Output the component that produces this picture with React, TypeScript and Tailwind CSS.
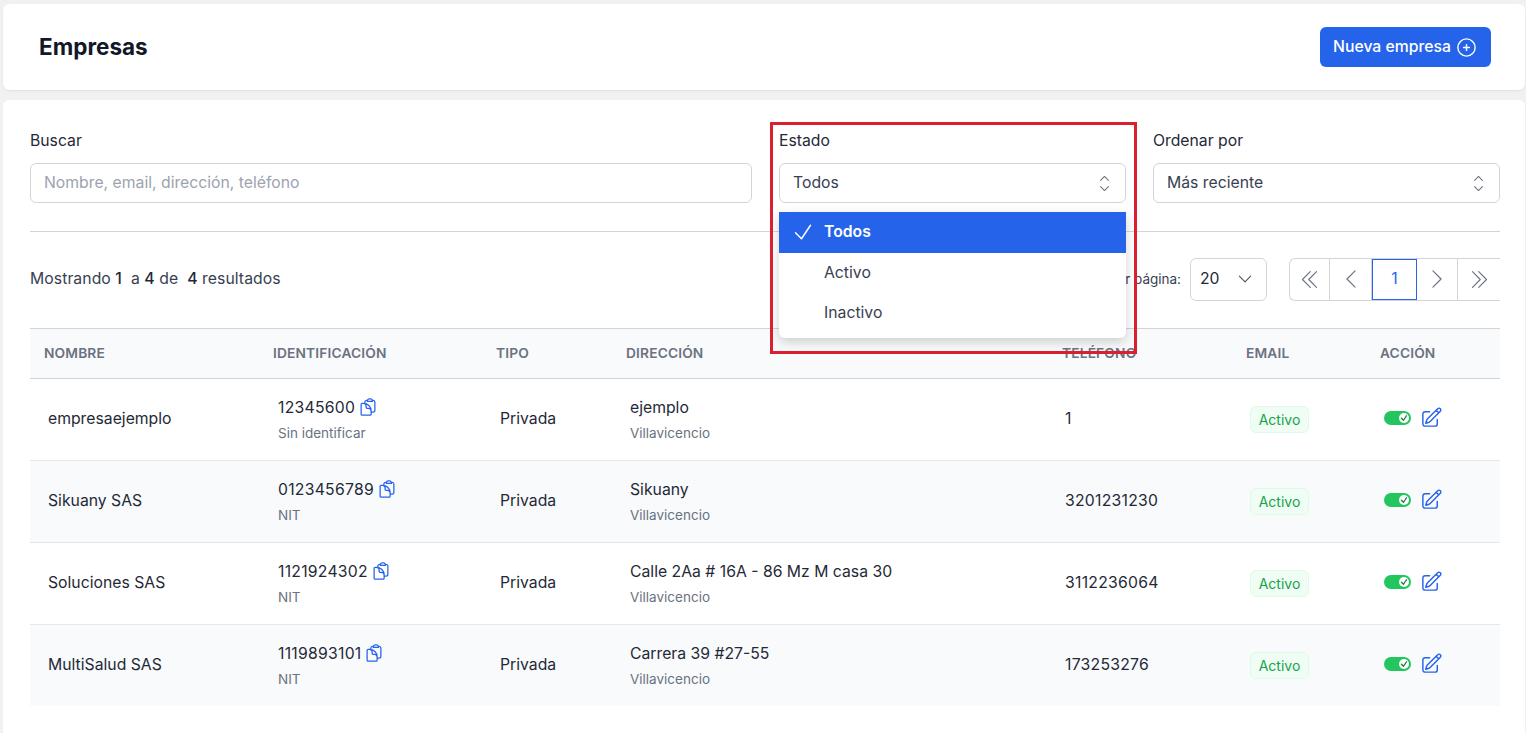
import {
	HiOutlineCheck,
	HiOutlineChevronDoubleLeft,
	HiOutlineChevronDoubleRight,
	HiOutlineChevronDown,
	HiOutlineChevronLeft,
	HiOutlineChevronRight,
	HiOutlineChevronUpDown,
	HiOutlineClipboardDocument,
	HiOutlinePencilSquare,
	HiOutlinePlusCircle,
} from "react-icons/hi2";

const empresas = [
	{ nombre: "empresaejemplo", id: "12345600", tipoId: "Sin identificar", dir: "ejemplo", tel: "1" },
	{ nombre: "Sikuany SAS", id: "0123456789", tipoId: "NIT", dir: "Sikuany", tel: "3201231230" },
	{ nombre: "Soluciones SAS", id: "1121924302", tipoId: "NIT", dir: "Calle 2Aa # 16A - 86 Mz M casa 30", tel: "3112236064" },
	{ nombre: "MultiSalud SAS", id: "1119893101", tipoId: "NIT", dir: "Carrera 39 #27-55", tel: "173253276" },
];

const columns = "grid grid-cols-[229px_223px_130px_436px_184px_134px_134px]";
const headers = ["NOMBRE", "IDENTIFICACIÓN", "TIPO", "DIRECCIÓN", "TELÉFONO", "EMAIL", "ACCIÓN"];

function Field({ label, value, placeholder }: { label: string; value?: string; placeholder?: string }) {
	return (
		<div className="flex flex-col">
			<span className="h-[24px] mt-[4px] text-[15.75px] leading-[24px] text-[#1f2937]">{label}</span>
			<div className="mt-[10px] flex h-[40px] items-center justify-between rounded-[6px] border border-[#d1d5db] bg-white pl-[13px] pr-[8px] text-[15.75px]">
				{placeholder ? <span className="text-[#9ca3af]">{placeholder}</span> : <span className="text-[#374151]">{value}</span>}
				{value && <HiOutlineChevronUpDown size={25} strokeWidth={1} className="text-[#6b7280]" />}
			</div>
		</div>
	);
}

function PageButton({ children, className }: { children: React.ReactNode; className: string }) {
	return <div className={`flex h-full items-center justify-center text-[#6b7280] ${className}`}>{children}</div>;
}

export default function App() {
	return (
		<div className="relative h-[733px] overflow-hidden bg-[#f1f1f1] pl-[3px] pr-[1px] pt-[4px] font-['Inter',sans-serif]">
			<div className="flex h-[86px] items-center justify-between rounded-[6px] bg-white pl-[36px] pr-[34px] shadow-[0_1px_2px_rgba(0,0,0,0.08)]">
				<h1 className="text-[22.5px] font-bold text-[#111827]">Empresas</h1>
				<button className="flex h-[40px] w-[171px] items-center justify-center gap-[4px] rounded-[6px] bg-[#2563eb] text-[15.75px] font-medium text-white">
					Nueva empresa
					<HiOutlinePlusCircle size={23} />
				</button>
			</div>

			<div className="mt-[10px] h-[633px] rounded-t-[6px] bg-white pl-[27px] pr-[25px] pt-[25px]">
				<div className="grid grid-cols-[722px_347px_347px] gap-x-[27px]">
					<Field label="Buscar" placeholder="Nombre, email, dirección, teléfono" />
					<Field label="Estado" value="Todos" />
					<Field label="Ordenar por" value="Más reciente" />
				</div>

				<div className="mt-[28px] border-t border-[#d1d5db]" />

				<div className="flex h-[97px] items-center justify-between border-b border-[#d1d5db] pb-[2px]">
					<p className="text-[15.75px] tracking-[0.06px] text-[#374151]">
						Mostrando <span className="font-medium text-[#1f2937]">1</span> &nbsp;a <span className="font-medium text-[#1f2937]">4</span> de &nbsp;
						<span className="font-medium text-[#1f2937]">4</span> resultados
					</p>
					<div className="flex items-center">
						<span className="mr-[9px] text-[13.5px] text-[#374151]">Filas por página:</span>
						<div className="flex h-[43px] w-[77px] items-center justify-between rounded-[6px] border border-[#d1d5db] pl-[9px] pr-[12px] text-[15.75px] text-[#1f2937]">
							20
							<HiOutlineChevronDown size={18} className="text-[#4b5563]" />
						</div>
						<div className="ml-[22px] flex h-[43px] items-center divide-x divide-[#d1d5db] rounded-l-[6px] border-y border-l border-[#d1d5db]">
							<PageButton className="w-[40px]"><HiOutlineChevronDoubleLeft size={25} strokeWidth={1.1} /></PageButton>
							<PageButton className="w-[42px]"><HiOutlineChevronLeft size={26} strokeWidth={1.1} /></PageButton>
							<PageButton className="w-[45px] border !border-[#2563eb] text-[15.75px] !text-[#2563eb]">1</PageButton>
							<PageButton className="w-[41px] !border-l-0"><HiOutlineChevronRight size={26} strokeWidth={1.1} /></PageButton>
							<PageButton className="w-[42px]"><HiOutlineChevronDoubleRight size={25} strokeWidth={1.1} /></PageButton>
						</div>
					</div>
				</div>

				<div className={`${columns} h-[50px] items-center border-b border-[#d1d5db] bg-[#f8fafc] text-[13.75px] font-semibold tracking-[0.15px] text-[#6b7280]`}>
					{headers.map((h) => (
						<span key={h} className="pl-[14px]">{h}</span>
					))}
				</div>

				{empresas.map((e, i) => (
					<div
						key={e.nombre}
						className={`${columns} items-center text-[15.75px] text-[#1f2937] ${i % 2 === 1 ? "bg-[#f8fafc]" : ""} ${i < 3 ? "h-[82px] border-b border-[#e5e7eb]" : "h-[81px]"}`}
					>
						<span className="pb-[2px] pl-[18px]">{e.nombre}</span>
						<div className="pl-[19px]">
							<div className="flex items-center gap-[3px]">
								<span className="tracking-[0.25px]">{e.id}</span>
								<HiOutlineClipboardDocument size={20} className="text-[#2563eb]" />
							</div>
							<div className="mt-[4px] text-[13.5px] text-[#6b7280]">{e.tipoId}</div>
						</div>
						<span className="pb-[2px] pl-[18px]">Privada</span>
						<div className="pl-[18px]">
							<div>{e.dir}</div>
							<div className="mt-[4px] text-[13.5px] text-[#6b7280]">Villavicencio</div>
						</div>
						<span className="pb-[2px] pl-[17px] tracking-[0.25px]">{e.tel}</span>
						<div className="pl-[18px]">
							<span className="inline-flex h-[27px] w-[59px] items-center justify-center rounded-[6px] border border-[#dcfce7] bg-[#f0fdf4] text-[14px] text-[#16a34a]">Activo</span>
						</div>
						<div className="flex items-center gap-[9px] pb-[4px] pl-[18px]">
							<div className="flex h-[14px] w-[27px] items-center justify-end rounded-full bg-[#22c55e] pr-[2px]">
								<div className="flex h-[10px] w-[10px] items-center justify-center rounded-full bg-white">
									<HiOutlineCheck size={8} strokeWidth={4} className="text-[#15803d]" />
								</div>
							</div>
							<HiOutlinePencilSquare size={23} className="text-[#2563eb]" />
						</div>
					</div>
				))}
			</div>

			{/* dropdown abierto */}
			<div className="absolute left-[779px] top-[212px] w-[347px] overflow-hidden rounded-b-[6px] bg-white pb-[5px] text-[15.75px] text-[#374151] shadow-[0_4px_12px_rgba(0,0,0,0.18)]">
				<div className="flex h-[41px] items-center bg-[#2563eb] pb-[1px] pl-[12px] font-semibold text-white">
					<HiOutlineCheck size={24} strokeWidth={1.5} />
					<span className="ml-[9px]">Todos</span>
				</div>
				<div className="flex h-[40px] items-center pl-[45px]">Activo</div>
				<div className="flex h-[40px] items-center pl-[45px]">Inactivo</div>
			</div>

			{/* marca roja */}
			<div className="pointer-events-none absolute left-[770px] top-[122px] h-[232px] w-[367px] border-[3px] border-[#dc1f2e]" />
		</div>
	);
}
